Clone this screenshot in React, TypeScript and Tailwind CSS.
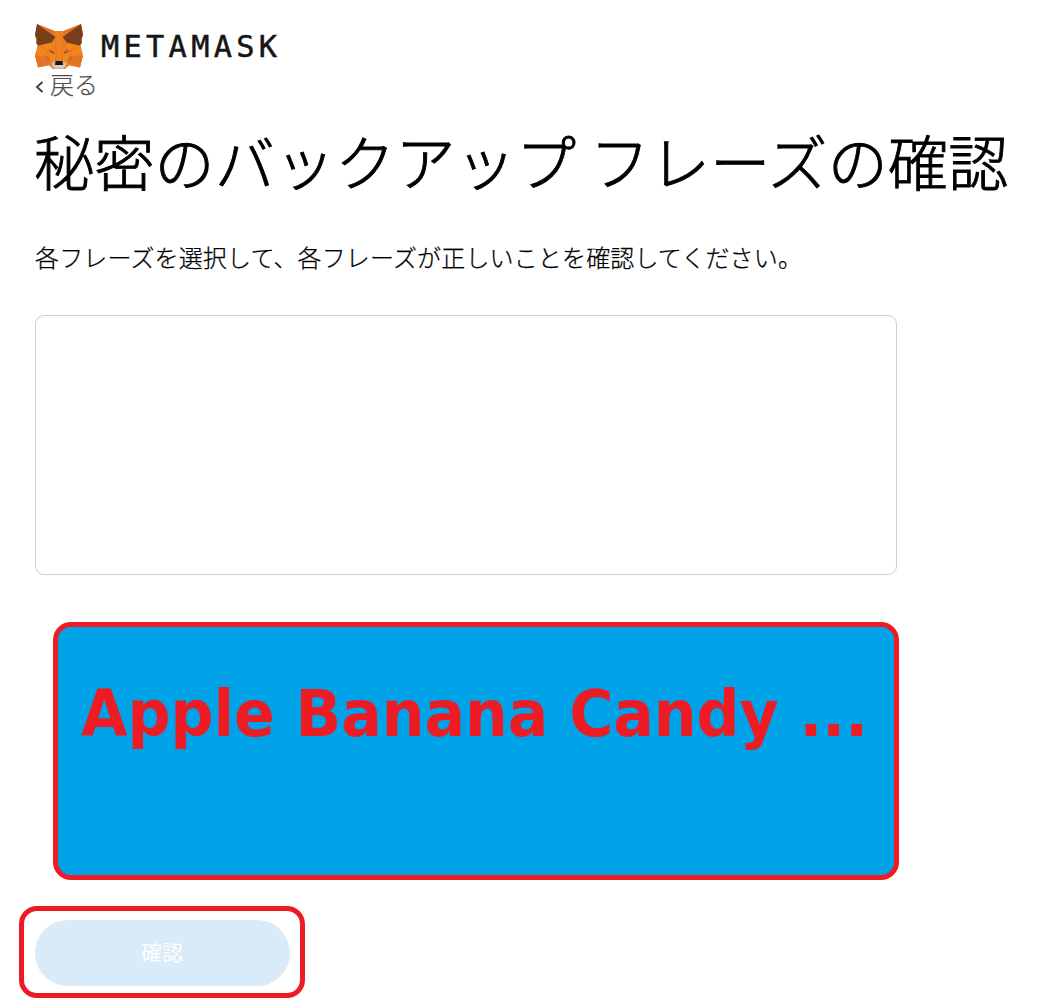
const Fox = () => (
  <svg width="48" height="45" viewBox="0 0 48 45" className="block shrink-0">
    <path fill="#ee8021" d="m2 0 17.500 7h9L46 0l2 11-2.500 11L48 31l-3 12.500L34 41.500 30 45H18l-4-3.500-11 2L0 31l2.500-9L0 11Z" />
    <path fill="#f6851b" d="m3 22 13-2 5 6 0 11-5 3-2-8-13-2ZM45 22l-13-2-5 6v11l5 3 2-8 13-2Z" opacity=".75" />
    <path fill="#e27525" d="m2 0 17.500 7v6ZM46 0 28.500 7v6ZM0 32l13 0 3 7-13 4.500Zm48 0-13 0-3 7 13 4.500Z" />
    <path fill="#763e1a" d="m2 0 18.500 13-4 5.500-13 3L1 19l1-4L0 11ZM46 0 27.500 13l4 5.500 13 3L47 19l-1-4 2-4Z" />
    <path stroke="#d66e20" strokeWidth=".5" fill="none" d="m20 13 1 13v11M28 13l-1 13v11M3 22l8 3 5 14M45 22l-8 3-5 14M16 19l5 7M32 19l-5 7" />
    <path fill="#d5602a" d="m12 27 5-2 3 5ZM36 27l-5-2-3 5ZM10.500 33l4 1-1.500 3.500ZM37.500 33l-4 1 1.500 3.500Z" />
    <path fill="#57505b" d="m15 28 3-.5 1.500 2.500ZM33 28l-3-.5-1.500 2.500Z" />
    <path fill="#c9b7aa" d="m16.500 38.500 3.500-1h8l3.500 1-.5 4-3 2.500h-8l-3-2.500Z" />
    <path fill="#ded3ca" d="m18 40 2 1.500h8l2-1.500-1 2.500-2 1h-6l-2-1Z" />
    <path fill="#161616" d="m20.500 37h7l.5 4h-8Z" />
  </svg>
);

export default function App() {
  return (
    <main className="flex h-[1007px] w-[1053px] flex-col items-start overflow-hidden bg-white pl-[35px] pt-6 font-['Noto_Sans_CJK_JP',sans-serif] text-black">
      <header className="flex h-[45px] items-center">
        <Fox />
        <span className="ml-[18px] origin-left scale-x-[0.977] whitespace-nowrap font-['DejaVu_Sans_Mono',monospace] text-[31px] leading-[45px] tracking-[4.4px] text-[#161616] [-webkit-text-stroke:0.5px_#161616]">METAMASK</span>
      </header>
      <a className="flex h-8 items-center text-[24px] font-light leading-8 text-[#4d4d4d] [-webkit-text-stroke:0.2px_#4d4d4d]">
        <svg width="9" height="14" viewBox="0 0 9 14" className="mr-[6px] mt-1" fill="none" stroke="#444" strokeWidth="2"><path d="M7.500 2 2 7l5.500 5" /></svg>
        <span className="-translate-y-px">戻る</span>
      </a>
      <h1 className="-ml-px mt-[14px] h-[90px] whitespace-nowrap text-[60px] font-light leading-[90px] tracking-[0.25px] [-webkit-text-stroke:0.9px_black]">秘密のバックアップ フレーズの確認</h1>
      <p className="mt-[34px] h-9 whitespace-nowrap text-[24px] font-light leading-9 tracking-[0.15px] [-webkit-text-stroke:0.25px_black]">各フレーズを選択して、各フレーズが正しいことを確認してください。</p>
      <div className="mt-10 h-[260px] w-[862px] shrink-0 rounded-[9px] border border-[#cdcdcd]" />
      <div className="ml-[18px] mt-[47px] h-[258px] w-[846px] shrink-0 rounded-[18px] border-[5px] border-[#ed1c24] bg-[#00a2e8] pl-[23px] pt-[47px]">
        <p className="w-max origin-left scale-x-[0.938] whitespace-nowrap font-['DejaVu_Sans',sans-serif] text-[64px] font-bold leading-[80px] text-[#ed1c24]">Apple Banana Candy ...</p>
      </div>
      <div className="-ml-4 mt-[26px] flex h-[92px] w-[286px] shrink-0 justify-center rounded-[18px] border-[5px] border-[#ed1c24] pt-[9px]">
        <button className="h-[66px] w-[255px] rounded-full bg-[#d9eaf8] pb-0.5 text-[21px] text-white">確認</button>
      </div>
    </main>
  );
}
